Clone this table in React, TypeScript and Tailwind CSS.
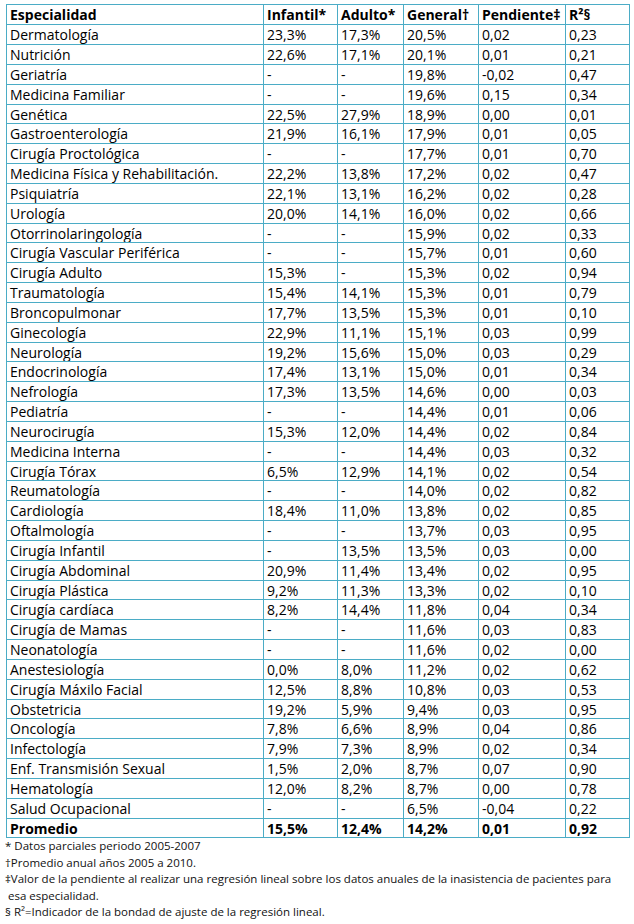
import React from "react";

type Row = [string, string, string, string, string, string];

const rows: Row[] = [
  ["Dermatología", "23,3%", "17,3%", "20,5%", "0,02", "0,23"],
  ["Nutrición", "22,6%", "17,1%", "20,1%", "0,01", "0,21"],
  ["Geriatría", "-", "-", "19,8%", "-0,02", "0,47"],
  ["Medicina Familiar", "-", "-", "19,6%", "0,15", "0,34"],
  ["Genética", "22,5%", "27,9%", "18,9%", "0,00", "0,01"],
  ["Gastroenterología", "21,9%", "16,1%", "17,9%", "0,01", "0,05"],
  ["Cirugía Proctológica", "-", "-", "17,7%", "0,01", "0,70"],
  ["Medicina Física y Rehabilitación.", "22,2%", "13,8%", "17,2%", "0,02", "0,47"],
  ["Psiquiatría", "22,1%", "13,1%", "16,2%", "0,02", "0,28"],
  ["Urología", "20,0%", "14,1%", "16,0%", "0,02", "0,66"],
  ["Otorrinolaringología", "-", "-", "15,9%", "0,02", "0,33"],
  ["Cirugía Vascular Periférica", "-", "-", "15,7%", "0,01", "0,60"],
  ["Cirugía Adulto", "15,3%", "-", "15,3%", "0,02", "0,94"],
  ["Traumatología", "15,4%", "14,1%", "15,3%", "0,01", "0,79"],
  ["Broncopulmonar", "17,7%", "13,5%", "15,3%", "0,01", "0,10"],
  ["Ginecología", "22,9%", "11,1%", "15,1%", "0,03", "0,99"],
  ["Neurología", "19,2%", "15,6%", "15,0%", "0,03", "0,29"],
  ["Endocrinología", "17,4%", "13,1%", "15,0%", "0,01", "0,34"],
  ["Nefrología", "17,3%", "13,5%", "14,6%", "0,00", "0,03"],
  ["Pediatría", "-", "-", "14,4%", "0,01", "0,06"],
  ["Neurocirugía", "15,3%", "12,0%", "14,4%", "0,02", "0,84"],
  ["Medicina Interna", "-", "-", "14,4%", "0,03", "0,32"],
  ["Cirugía Tórax", "6,5%", "12,9%", "14,1%", "0,02", "0,54"],
  ["Reumatología", "-", "-", "14,0%", "0,02", "0,82"],
  ["Cardiología", "18,4%", "11,0%", "13,8%", "0,02", "0,85"],
  ["Oftalmología", "-", "-", "13,7%", "0,03", "0,95"],
  ["Cirugía Infantil", "-", "13,5%", "13,5%", "0,03", "0,00"],
  ["Cirugía Abdominal", "20,9%", "11,4%", "13,4%", "0,02", "0,95"],
  ["Cirugía Plástica", "9,2%", "11,3%", "13,3%", "0,02", "0,10"],
  ["Cirugía cardíaca", "8,2%", "14,4%", "11,8%", "0,04", "0,34"],
  ["Cirugía de Mamas", "-", "-", "11,6%", "0,03", "0,83"],
  ["Neonatología", "-", "-", "11,6%", "0,02", "0,00"],
  ["Anestesiología", "0,0%", "8,0%", "11,2%", "0,02", "0,62"],
  ["Cirugía Máxilo Facial", "12,5%", "8,8%", "10,8%", "0,03", "0,53"],
  ["Obstetricia", "19,2%", "5,9%", "9,4%", "0,03", "0,95"],
  ["Oncología", "7,8%", "6,6%", "8,9%", "0,04", "0,86"],
  ["Infectología", "7,9%", "7,3%", "8,9%", "0,02", "0,34"],
  ["Enf. Transmisión Sexual", "1,5%", "2,0%", "8,7%", "0,07", "0,90"],
  ["Hematología", "12,0%", "8,2%", "8,7%", "0,00", "0,78"],
  ["Salud Ocupacional", "-", "-", "6,5%", "-0,04", "0,22"],
];

const header: Row = ["Especialidad", "Infantil*", "Adulto*", "General†", "Pendiente‡", "R²§"];
const promedio: Row = ["Promedio", "15,5%", "12,4%", "14,2%", "0,01", "0,92"];

function TableRow({ cells, bold, idx }: { cells: Row; bold?: boolean; idx: number }) {
  const h = idx % 6 === 5 ? "h-[19px]" : "h-[20px]";
  return (
    <div className={`grid grid-cols-[257px_74px_66px_75px_87px_64px] ${h} ${bold ? "font-bold" : ""}`}>
      {cells.map((c, i) => (
        <div
          key={i}
          className="border-r border-b border-[#4bacc6] pl-[3px] flex items-center whitespace-nowrap overflow-hidden leading-none pt-[1px]"
        >
          {c}
        </div>
      ))}
    </div>
  );
}

export default function App() {
  const all: { cells: Row; bold?: boolean }[] = [
    { cells: header, bold: true },
    ...rows.map((r) => ({ cells: r })),
    { cells: promedio, bold: true },
  ];
  return (
    <div
      className="w-[634px] h-[924px] bg-white text-black overflow-hidden"
      style={{ fontFamily: '"Open Sans", "Liberation Sans", sans-serif' }}
    >
      <div className="pt-[4px] pl-[6px]">
        <div className="w-[624px] border-l border-t border-[#4bacc6] text-[14px]">
          {all.map((r, i) => (
            <TableRow key={i} cells={r.cells} bold={r.bold} idx={i} />
          ))}
        </div>
      </div>
      <div className="pl-[5px] text-[11.5px] leading-[16.5px] text-[#111] whitespace-nowrap">
        <div>* Datos parciales periodo 2005-2007</div>
        <div>†Promedio anual años 2005 a 2010.</div>
        <div>‡Valor de la pendiente al realizar una regresión lineal sobre los datos anuales de la inasistencia de pacientes para</div>
        <div className="pl-[3px]">esa especialidad.</div>
        <div>§ R²=Indicador de la bondad de ajuste de la regresión lineal.</div>
      </div>
    </div>
  );
}
